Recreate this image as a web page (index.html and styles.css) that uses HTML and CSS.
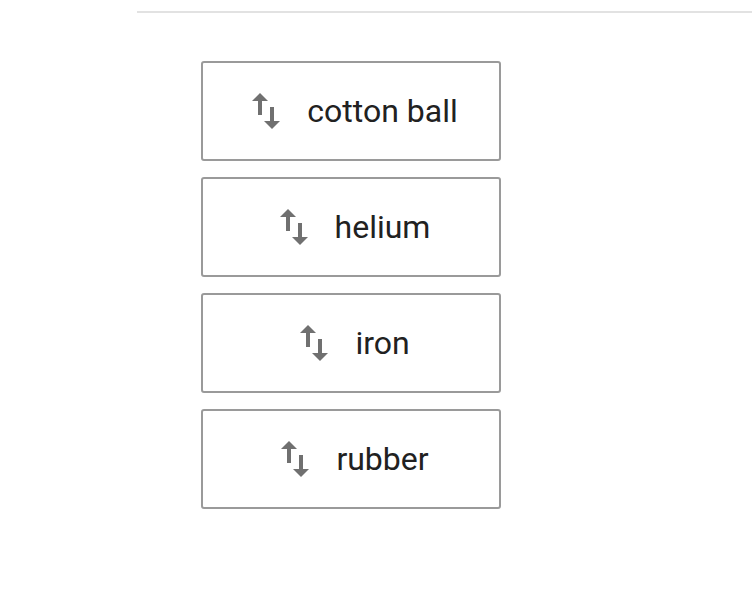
FILE: index.html
```html
<!DOCTYPE html>
<html>
<head>
<meta charset="utf-8">
<link rel="stylesheet" href="styles.css">
</head>
<body>
<div class="page">
  <div class="rule"></div>
  <div class="list">
    <div class="item">
      <svg class="icon" viewBox="0 0 24 24"><path d="M16 17.01V10h-2v7.01h-3L15 21l4-3.99h-3zM9 3L5 6.99h3V14h2V6.99h3L9 3z"/></svg>
      <span class="label">cotton ball</span>
    </div>
    <div class="item">
      <svg class="icon" viewBox="0 0 24 24"><path d="M16 17.01V10h-2v7.01h-3L15 21l4-3.99h-3zM9 3L5 6.99h3V14h2V6.99h3L9 3z"/></svg>
      <span class="label">helium</span>
    </div>
    <div class="item">
      <svg class="icon" viewBox="0 0 24 24"><path d="M16 17.01V10h-2v7.01h-3L15 21l4-3.99h-3zM9 3L5 6.99h3V14h2V6.99h3L9 3z"/></svg>
      <span class="label">iron</span>
    </div>
    <div class="item">
      <svg class="icon" viewBox="0 0 24 24"><path d="M16 17.01V10h-2v7.01h-3L15 21l4-3.99h-3zM9 3L5 6.99h3V14h2V6.99h3L9 3z"/></svg>
      <span class="label">rubber</span>
    </div>
  </div>
</div>
</body>
</html>
```
FILE: styles.css
```css
html, body {
  margin: 0;
  padding: 0;
  background: #ffffff;
}
.page {
  width: 752px;
  height: 605px;
  padding-top: 11px;
  box-sizing: border-box;
  font-family: Roboto, "Liberation Sans", sans-serif;
}
.rule {
  margin-left: 137px;
  height: 2px;
  background: #e2e2e2;
}
.list {
  margin-top: 48px;
  margin-left: 201px;
  width: 300px;
  display: flex;
  flex-direction: column;
  gap: 16px;
}
.item {
  height: 100px;
  box-sizing: border-box;
  border: 2px solid #9a9a9a;
  border-radius: 3px;
  display: flex;
  align-items: center;
  justify-content: center;
  gap: 17px;
  padding-right: 2px;
}
.icon {
  width: 48px;
  height: 48px;
  fill: #707070;
  flex: none;
}
.label {
  font-size: 32px;
  color: #212121;
  line-height: 38px;
}
```
